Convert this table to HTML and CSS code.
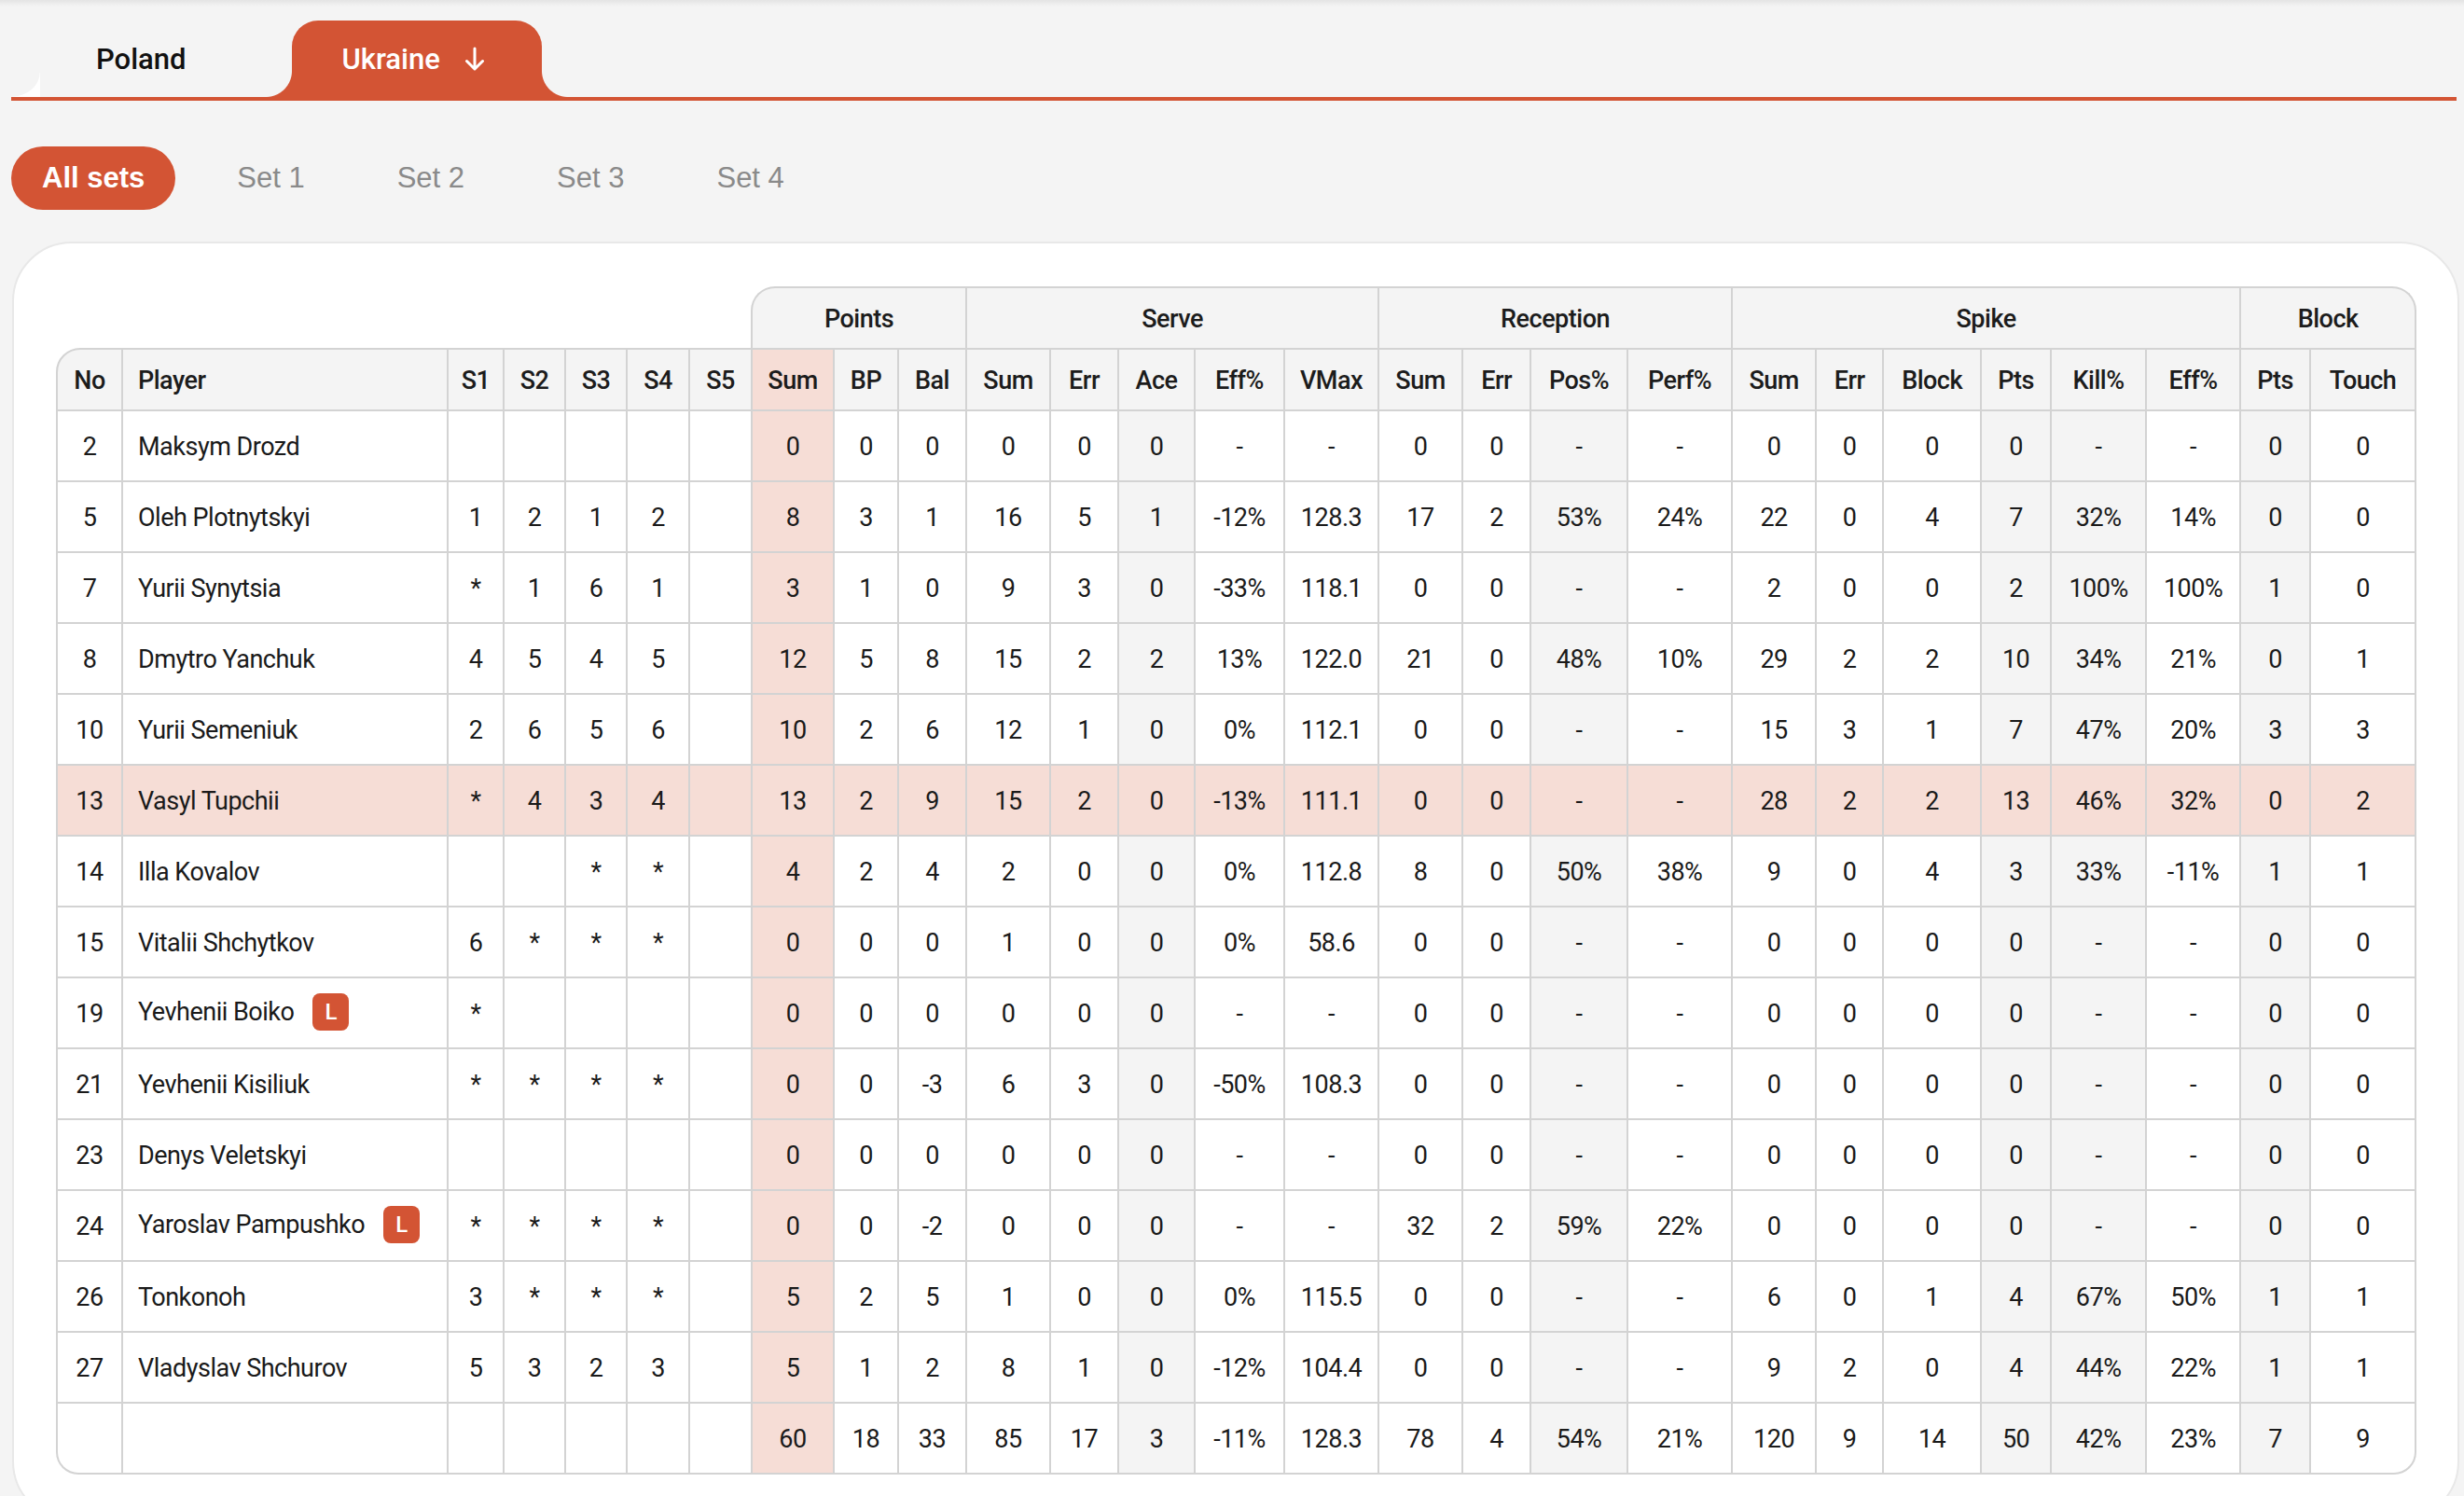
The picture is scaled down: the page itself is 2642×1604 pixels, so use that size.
FILE: index.html
```html
<!DOCTYPE html>
<html lang="en">
<head>
<meta charset="utf-8">
<title>Ukraine – All sets</title>
<link rel="stylesheet" href="styles.css">
</head>
<body class="page">
<div class="wrap">
  <div class="tabbar">
    <div class="tab tab-poland">Poland</div>
    <div class="tab tab-ukraine">Ukraine
      <svg class="arrow" viewBox="0 0 24 27" fill="none" stroke="#fff" stroke-width="3" stroke-linecap="round" stroke-linejoin="round"><path d="M12 2v22M3.5 15.5L12 24l8.5-8.5"/></svg>
    </div>
  </div>
  <div class="sets">
    <div class="set set-active">All sets</div>
    <div class="set">Set 1</div>
    <div class="set">Set 2</div>
    <div class="set">Set 3</div>
    <div class="set">Set 4</div>
  </div>
  <div class="card">
    <table class="stats">
      <colgroup>
        <col><col><col><col><col><col><col><col><col><col><col><col><col><col><col><col><col><col><col><col><col><col><col><col><col><col><col>
      </colgroup>
      <thead>
        <tr class="grp">
          <th class="blank" colspan="7"></th>
          <th class="g-points" colspan="3">Points</th>
          <th colspan="5">Serve</th>
          <th colspan="4">Reception</th>
          <th colspan="6">Spike</th>
          <th class="g-block" colspan="2">Block</th>
        </tr>
        <tr class="cols">
          <th>No</th><th class="pl">Player</th><th>S1</th><th>S2</th><th>S3</th><th>S4</th><th>S5</th>
          <th>Sum</th><th>BP</th><th>Bal</th>
          <th>Sum</th><th>Err</th><th>Ace</th><th>Eff%</th><th>VMax</th>
          <th>Sum</th><th>Err</th><th>Pos%</th><th>Perf%</th>
          <th>Sum</th><th>Err</th><th>Block</th><th>Pts</th><th>Kill%</th><th>Eff%</th>
          <th>Pts</th><th>Touch</th>
        </tr>
      </thead>
      <tbody>
        <tr><td>2</td><td class="pl">Maksym Drozd</td><td></td><td></td><td></td><td></td><td></td><td>0</td><td>0</td><td>0</td><td>0</td><td>0</td><td>0</td><td>-</td><td>-</td><td>0</td><td>0</td><td>-</td><td>-</td><td>0</td><td>0</td><td>0</td><td>0</td><td>-</td><td>-</td><td>0</td><td>0</td></tr>
        <tr><td>5</td><td class="pl">Oleh Plotnytskyi</td><td>1</td><td>2</td><td>1</td><td>2</td><td></td><td>8</td><td>3</td><td>1</td><td>16</td><td>5</td><td>1</td><td>-12%</td><td>128.3</td><td>17</td><td>2</td><td>53%</td><td>24%</td><td>22</td><td>0</td><td>4</td><td>7</td><td>32%</td><td>14%</td><td>0</td><td>0</td></tr>
        <tr><td>7</td><td class="pl">Yurii Synytsia</td><td>*</td><td>1</td><td>6</td><td>1</td><td></td><td>3</td><td>1</td><td>0</td><td>9</td><td>3</td><td>0</td><td>-33%</td><td>118.1</td><td>0</td><td>0</td><td>-</td><td>-</td><td>2</td><td>0</td><td>0</td><td>2</td><td>100%</td><td>100%</td><td>1</td><td>0</td></tr>
        <tr><td>8</td><td class="pl">Dmytro Yanchuk</td><td>4</td><td>5</td><td>4</td><td>5</td><td></td><td>12</td><td>5</td><td>8</td><td>15</td><td>2</td><td>2</td><td>13%</td><td>122.0</td><td>21</td><td>0</td><td>48%</td><td>10%</td><td>29</td><td>2</td><td>2</td><td>10</td><td>34%</td><td>21%</td><td>0</td><td>1</td></tr>
        <tr><td>10</td><td class="pl">Yurii Semeniuk</td><td>2</td><td>6</td><td>5</td><td>6</td><td></td><td>10</td><td>2</td><td>6</td><td>12</td><td>1</td><td>0</td><td>0%</td><td>112.1</td><td>0</td><td>0</td><td>-</td><td>-</td><td>15</td><td>3</td><td>1</td><td>7</td><td>47%</td><td>20%</td><td>3</td><td>3</td></tr>
        <tr class="hl"><td>13</td><td class="pl">Vasyl Tupchii</td><td>*</td><td>4</td><td>3</td><td>4</td><td></td><td>13</td><td>2</td><td>9</td><td>15</td><td>2</td><td>0</td><td>-13%</td><td>111.1</td><td>0</td><td>0</td><td>-</td><td>-</td><td>28</td><td>2</td><td>2</td><td>13</td><td>46%</td><td>32%</td><td>0</td><td>2</td></tr>
        <tr><td>14</td><td class="pl">Illa Kovalov</td><td></td><td></td><td>*</td><td>*</td><td></td><td>4</td><td>2</td><td>4</td><td>2</td><td>0</td><td>0</td><td>0%</td><td>112.8</td><td>8</td><td>0</td><td>50%</td><td>38%</td><td>9</td><td>0</td><td>4</td><td>3</td><td>33%</td><td>-11%</td><td>1</td><td>1</td></tr>
        <tr><td>15</td><td class="pl">Vitalii Shchytkov</td><td>6</td><td>*</td><td>*</td><td>*</td><td></td><td>0</td><td>0</td><td>0</td><td>1</td><td>0</td><td>0</td><td>0%</td><td>58.6</td><td>0</td><td>0</td><td>-</td><td>-</td><td>0</td><td>0</td><td>0</td><td>0</td><td>-</td><td>-</td><td>0</td><td>0</td></tr>
        <tr><td>19</td><td class="pl">Yevhenii Boiko<span class="lib">L</span></td><td>*</td><td></td><td></td><td></td><td></td><td>0</td><td>0</td><td>0</td><td>0</td><td>0</td><td>0</td><td>-</td><td>-</td><td>0</td><td>0</td><td>-</td><td>-</td><td>0</td><td>0</td><td>0</td><td>0</td><td>-</td><td>-</td><td>0</td><td>0</td></tr>
        <tr><td>21</td><td class="pl">Yevhenii Kisiliuk</td><td>*</td><td>*</td><td>*</td><td>*</td><td></td><td>0</td><td>0</td><td>-3</td><td>6</td><td>3</td><td>0</td><td>-50%</td><td>108.3</td><td>0</td><td>0</td><td>-</td><td>-</td><td>0</td><td>0</td><td>0</td><td>0</td><td>-</td><td>-</td><td>0</td><td>0</td></tr>
        <tr><td>23</td><td class="pl">Denys Veletskyi</td><td></td><td></td><td></td><td></td><td></td><td>0</td><td>0</td><td>0</td><td>0</td><td>0</td><td>0</td><td>-</td><td>-</td><td>0</td><td>0</td><td>-</td><td>-</td><td>0</td><td>0</td><td>0</td><td>0</td><td>-</td><td>-</td><td>0</td><td>0</td></tr>
        <tr><td>24</td><td class="pl">Yaroslav Pampushko<span class="lib">L</span></td><td>*</td><td>*</td><td>*</td><td>*</td><td></td><td>0</td><td>0</td><td>-2</td><td>0</td><td>0</td><td>0</td><td>-</td><td>-</td><td>32</td><td>2</td><td>59%</td><td>22%</td><td>0</td><td>0</td><td>0</td><td>0</td><td>-</td><td>-</td><td>0</td><td>0</td></tr>
        <tr><td>26</td><td class="pl">Tonkonoh</td><td>3</td><td>*</td><td>*</td><td>*</td><td></td><td>5</td><td>2</td><td>5</td><td>1</td><td>0</td><td>0</td><td>0%</td><td>115.5</td><td>0</td><td>0</td><td>-</td><td>-</td><td>6</td><td>0</td><td>1</td><td>4</td><td>67%</td><td>50%</td><td>1</td><td>1</td></tr>
        <tr><td>27</td><td class="pl">Vladyslav Shchurov</td><td>5</td><td>3</td><td>2</td><td>3</td><td></td><td>5</td><td>1</td><td>2</td><td>8</td><td>1</td><td>0</td><td>-12%</td><td>104.4</td><td>0</td><td>0</td><td>-</td><td>-</td><td>9</td><td>2</td><td>0</td><td>4</td><td>44%</td><td>22%</td><td>1</td><td>1</td></tr>
        <tr class="total"><td></td><td class="pl"></td><td></td><td></td><td></td><td></td><td></td><td>60</td><td>18</td><td>33</td><td>85</td><td>17</td><td>3</td><td>-11%</td><td>128.3</td><td>78</td><td>4</td><td>54%</td><td>21%</td><td>120</td><td>9</td><td>14</td><td>50</td><td>42%</td><td>23%</td><td>7</td><td>9</td></tr>
      </tbody>
    </table>
  </div>
</div>
</body>
</html>
```

FILE: styles.css
```css
* { box-sizing: border-box; }

.page {
  margin: 0;
  background: #f4f4f4 linear-gradient(#e4e4e4, #f4f4f4 7px) no-repeat;
  font-family: Roboto, "Liberation Sans", Arial, sans-serif;
  color: #1a1a1a;
}

.wrap {
  padding: 22px 5px 0 12px;
}

/* ---------- team tabs ---------- */
.tabbar {
  display: flex;
  align-items: flex-end;
  gap: 53px;
  padding-left: 31px;
  margin-right: 3px;
  border-bottom: 4px solid #d35434;
}

.tab {
  position: relative;
  height: 82px;
  display: flex;
  align-items: center;
  font-size: 31px;
  font-weight: 500;
}

.tab-poland {
  padding: 0 60px;
  color: #111;
}

.tab-poland::before {
  content: "";
  position: absolute;
  left: -31px;
  bottom: 0;
  width: 31px;
  height: 26px;
  background: radial-gradient(ellipse 31px 26px at 0 0, rgba(255,255,255,0) 97%, #fff 100%);
}

.tab-ukraine {
  padding: 0 60px 0 54px;
  gap: 25px;
  background: #d35434;
  color: #fff;
  border-radius: 28px 28px 0 0;
}

.tab-ukraine::before,
.tab-ukraine::after {
  content: "";
  position: absolute;
  bottom: 0;
  width: 28px;
  height: 28px;
}

.tab-ukraine::before {
  left: -28px;
  background: radial-gradient(circle at 0 0, rgba(211,84,52,0) 27.5px, #d35434 28.5px);
}

.tab-ukraine::after {
  right: -28px;
  background: radial-gradient(circle at 100% 0, rgba(211,84,52,0) 27.5px, #d35434 28.5px);
}

.arrow {
  width: 24px;
  height: 27px;
  display: block;
}

/* ---------- set pills ---------- */
.sets {
  display: flex;
  gap: 33px;
  margin-top: 49px;
}

.set {
  height: 68px;
  padding: 0 33px;
  border-radius: 34px;
  display: flex;
  align-items: center;
  font-family: "Liberation Sans", Arial, sans-serif;
  font-size: 31px;
  color: #8a8a8a;
}

.set-active {
  background: #d35434;
  color: #fff;
  font-weight: 700;
}

/* ---------- card ---------- */
.card {
  margin: 34px 0 0 1px;
  background: #fff;
  border: 2px solid #e8e8e8;
  border-radius: 64px;
  padding: 46px 44px 48px 45px;
}

/* ---------- stats table ---------- */
.stats {
  border-collapse: separate;
  border-spacing: 0;
  table-layout: fixed;
  width: 2531px;
  font-size: 27px;
  letter-spacing: -0.5px;
  color: #1a1a1a;
}

.stats col:nth-child(1) { width: 72px; }
.stats col:nth-child(2) { width: 349px; }
.stats col:nth-child(3) { width: 60px; }
.stats col:nth-child(4) { width: 66px; }
.stats col:nth-child(5) { width: 66px; }
.stats col:nth-child(6) { width: 67px; }
.stats col:nth-child(7) { width: 65px; }
.stats col:nth-child(8) { width: 90px; }
.stats col:nth-child(9) { width: 69px; }
.stats col:nth-child(10) { width: 73px; }
.stats col:nth-child(11) { width: 90px; }
.stats col:nth-child(12) { width: 73px; }
.stats col:nth-child(13) { width: 82px; }
.stats col:nth-child(14) { width: 96px; }
.stats col:nth-child(15) { width: 101px; }
.stats col:nth-child(16) { width: 90px; }
.stats col:nth-child(17) { width: 73px; }
.stats col:nth-child(18) { width: 104px; }
.stats col:nth-child(19) { width: 112px; }
.stats col:nth-child(20) { width: 90px; }
.stats col:nth-child(21) { width: 72px; }
.stats col:nth-child(22) { width: 105px; }
.stats col:nth-child(23) { width: 75px; }
.stats col:nth-child(24) { width: 102px; }
.stats col:nth-child(25) { width: 101px; }
.stats col:nth-child(26) { width: 75px; }
.stats col:nth-child(27) { width: 113px; }

.stats th,
.stats td {
  padding: 2px 0 0;
  text-align: center;
  vertical-align: middle;
  white-space: nowrap;
  border-right: 2px solid #d3d3d3;
  border-bottom: 2px solid #d3d3d3;
}

.stats th {
  font-weight: 500;
  background: #f4f4f4;
  color: #1c1c1c;
}

.grp th {
  height: 66px;
  border-top: 2px solid #d3d3d3;
  border-bottom: none;
}

.grp .blank {
  background: none;
  border: none;
}

.grp .g-points {
  border-left: 2px solid #d3d3d3;
  border-top-left-radius: 26px;
}

.grp .g-block {
  border-top-right-radius: 26px;
}

.cols th {
  height: 68px;
  border-top: 2px solid #d3d3d3;
}

.cols th:first-child {
  border-left: 2px solid #d3d3d3;
  border-top-left-radius: 26px;
}

.stats tbody td {
  height: 76px;
  background: #fff;
}

.stats tbody td:first-child {
  border-left: 2px solid #d3d3d3;
}

.cols th:nth-child(7),
.stats tbody td:nth-child(7) {
  border-right: none;
}

.cols th:nth-child(8),
.stats tbody td:nth-child(8) {
  border-left: 2px solid #d3d3d3;
  background: #f6ddd6;
}

.stats tbody td:nth-child(13),
.stats tbody td:nth-child(18),
.stats tbody td:nth-child(23),
.stats tbody td:nth-child(24),
.stats tbody td:nth-child(26) {
  background: #f4f4f4;
}

.stats tbody tr.hl td {
  background: #f6ddd6;
}

.stats .pl {
  text-align: left;
  padding-left: 16px;
}

.stats tbody tr.total td:first-child {
  border-bottom-left-radius: 24px;
}

.stats tbody tr.total td:last-child {
  border-bottom-right-radius: 24px;
}

.lib {
  display: inline-flex;
  align-items: center;
  justify-content: center;
  width: 39px;
  height: 40px;
  margin-left: 20px;
  margin-top: -4px;
  border-radius: 8px;
  background: #d35434;
  color: #fff;
  font-size: 24px;
  font-weight: 500;
  letter-spacing: 0;
  vertical-align: middle;
}
```
